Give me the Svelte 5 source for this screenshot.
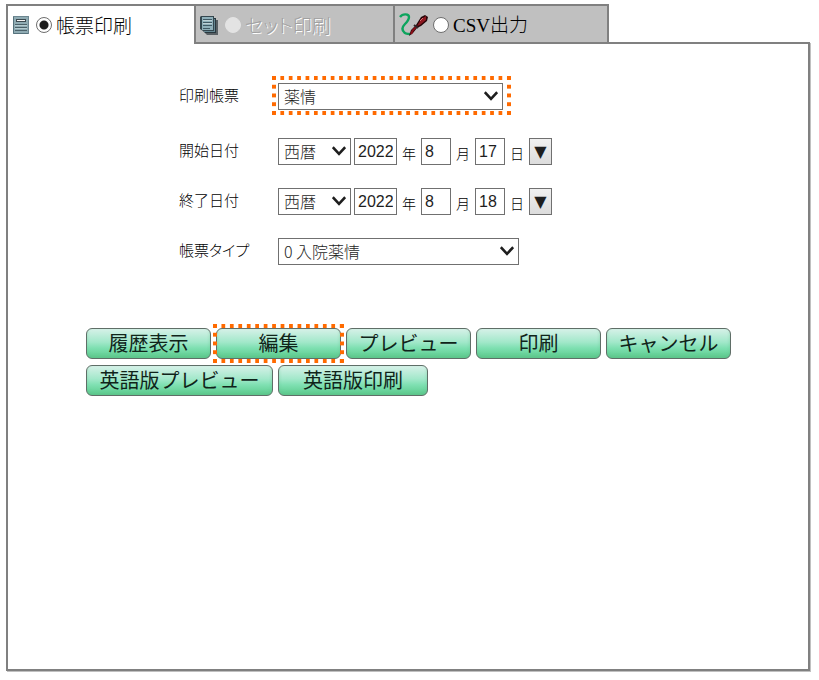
<script lang="ts">
    interface DateRow {
        id: string;
        label: string;
        era: string;
        year: string;
        month: string;
        day: string;
    }

    let mode = $state("report");
    let report = $state("薬情");
    let reportType = $state("0 入院薬情");

    let dates = $state<DateRow[]>([
        { id: "start", label: "開始日付", era: "西暦", year: "2022", month: "8", day: "17" },
        { id: "end", label: "終了日付", era: "西暦", year: "2022", month: "8", day: "18" },
    ]);

    const actions = [
        [
            { label: "履歴表示" },
            { label: "編集", marked: true },
            { label: "プレビュー" },
            { label: "印刷" },
            { label: "キャンセル" },
        ],
        [
            { label: "英語版プレビュー", size: "wide" },
            { label: "英語版印刷", size: "medium" },
        ],
    ];
</script>

{#snippet chevron()}
    <svg class="chevron" width="14" height="10" viewBox="0 0 14 10" aria-hidden="true">
        <path d="M0.8 1.2 L7 7.8 L13.2 1.2" fill="none" stroke="#1e1e1e" stroke-width="2.6" />
    </svg>
{/snippet}

<div class="page">
    <div class="tabs">
        <label class="tab first" class:active={mode === "report"}>
            <svg width="16" height="18" viewBox="0 0 16 18" aria-hidden="true">
                <rect width="16" height="18" fill="#8fabb3" />
                <path d="M0.5 0V17.5H16" fill="none" stroke="#56727c" />
                <path d="M15.5 0V18M0 0.5H16" fill="none" stroke="#6d8791" />
                <rect x="3" y="3" width="10" height="3" fill="#3d4a50" />
                <rect x="4" y="4" width="8" height="1" fill="#f4f4f4" />
                <path d="M2 8.5H14M2 11.5H14M2 14.5H14" stroke="#4c626a" />
                <path d="M2 9.5H14M2 12.5H14" stroke="#b4cbd0" />
            </svg>
            <input type="radio" name="mode" value="report" bind:group={mode} />
            <span>帳票印刷</span>
        </label>
        <label class="tab second disabled">
            <svg width="18" height="19" viewBox="0 0 18 19" aria-hidden="true">
                <path d="M5 4H18V19H7L5 17Z" fill="#596064" />
                <path d="M3 2H16V17H5L3 15Z" fill="#29383f" />
                <path d="M4 3H15V16H4Z" fill="#668792" />
                <path d="M1 0H14V15H3L0 13V1Z" fill="#35474f" />
                <rect x="2" y="1" width="11" height="13" fill="#8fb0ba" />
                <path d="M3 3.5H12M3 6.5H12M3 9.5H12M3 12.5H10" stroke="#415a65" />
                <path d="M3 4.5H12M3 7.5H12" stroke="#bed1d6" />
            </svg>
            <input type="radio" name="mode" value="set" disabled bind:group={mode} />
            <span>セット印刷</span>
        </label>
        <label class="tab third" class:active={mode === "csv"}>
            <svg class="pen" width="29" height="24" viewBox="0 0 29 24" aria-hidden="true">
                <path
                    d="M1 4C4 0 10 1 10 4C10 7 8 9 6 11C3 14 3 17 5 19C6 21 9 21 11 21"
                    fill="none"
                    stroke="#0da45d"
                    stroke-width="2.4"
                />
                <path d="M10 23L12 17L17 12L22 4L26 2L29 4L28 8L22 13L18 15L14 20Z" fill="#260609" />
                <path d="M12 21L14 17L18 13" fill="none" stroke="#8a0f18" stroke-width="2" />
                <path d="M18 13L22 6L27 3L27 7L21 12Z" fill="#8d1820" />
                <path d="M21 8L24 5" stroke="#dc6b70" />
                <path d="M15 12L19 15" stroke="#30272a" stroke-width="2" />
            </svg>
            <input type="radio" name="mode" value="csv" bind:group={mode} />
            <span><span class="latin">CSV</span>出力</span>
        </label>
    </div>

    <main class="panel">
        <form class="fields" onsubmit={(e) => e.preventDefault()}>
            <div class="row report-row">
                <label class="name" for="report">印刷帳票</label>
                <div class="select marked">
                    <select id="report" class="report" bind:value={report}>
                        <option>薬情</option>
                    </select>
                    {@render chevron()}
                </div>
            </div>

            {#each dates as date (date.id)}
                <div class="row">
                    <label class="name" for="{date.id}-era">{date.label}</label>
                    <div class="select">
                        <select id="{date.id}-era" class="era" bind:value={date.era}>
                            <option>西暦</option>
                        </select>
                        {@render chevron()}
                    </div>
                    <input id="{date.id}-year" class="year" type="text" bind:value={date.year} />
                    <label class="unit" for="{date.id}-year">年</label>
                    <input id="{date.id}-month" type="text" bind:value={date.month} />
                    <label class="unit" for="{date.id}-month">月</label>
                    <input id="{date.id}-day" type="text" bind:value={date.day} />
                    <label class="unit" for="{date.id}-day">日</label>
                    <button class="picker" type="button">▼</button>
                </div>
            {/each}

            <div class="row">
                <label class="name" for="type">帳票タイプ</label>
                <div class="select">
                    <select id="type" class="type" bind:value={reportType}>
                        <option>0 入院薬情</option>
                    </select>
                    {@render chevron()}
                </div>
            </div>
        </form>

        <div class="actions">
            {#each actions as group}
                <div class="action-row">
                    {#each group as action (action.label)}
                        <button class="action {action.size ?? ''}" class:marked={action.marked} type="button">
                            {action.label}
                        </button>
                    {/each}
                </div>
            {/each}
        </div>
    </main>
</div>

<style>
    :global(body) {
        background: #fff;
    }

    .page {
        box-sizing: border-box;
        display: flex;
        flex-direction: column;
        min-height: 100vh;
        padding: 4px 9px 9px 6px;
        color: #000;
        font-family: "Liberation Sans", "Noto Sans CJK JP", sans-serif;
    }

    .tabs {
        display: flex;
    }

    .tab {
        box-sizing: border-box;
        display: flex;
        align-items: center;
        height: 40px;
        padding: 2px 4px 0;
        border: 2px solid #808080;
        border-right: none;
        background: #c0c0c0;
        font-family: "Noto Sans CJK JP", sans-serif;
        font-size: 19px;
        line-height: 28px;
        font-weight: 300;
        font-feature-settings: "palt";
        white-space: nowrap;
    }

    .tab.active {
        position: relative;
        z-index: 1;
        padding-bottom: 2px;
        border-bottom: none;
        background: #fff;
    }

    .tab svg {
        flex: none;
        margin-right: 7px;
    }

    .tab svg.pen {
        margin-right: 5px;
    }

    .latin {
        font-family: "Times New Roman", "Liberation Serif", serif;
        font-weight: normal;
        font-feature-settings: normal;
    }

    .tab.first {
        width: 188px;
        padding-left: 5px;
    }

    .second {
        width: 199px;
    }

    .third {
        width: 216px;
        border-right: 2px solid #808080;
    }

    .tab.disabled {
        color: #a0a0a0;
        text-shadow: 1px 1px #fff;
    }

    .tab input {
        flex: none;
        appearance: none;
        width: 16px;
        height: 16px;
        margin: 0 4px 0 0;
        border: 1px solid #6e6e6e;
        border-radius: 50%;
        background: #fff;
    }

    .tab input:checked {
        background: radial-gradient(circle, #1e1e1e 4px, #fff 5px);
    }

    .tab input:disabled {
        border-color: #e3e3e3;
        background: #e3e3e3;
    }

    .panel {
        flex: 1;
        margin-top: -2px;
        border: 2px solid #808080;
        box-shadow: 1px 1px #c0c0c0;
    }

    .fields {
        display: flex;
        flex-direction: column;
        gap: 23px;
        padding: 39px 0 0 171px;
    }

    .row {
        display: flex;
        align-items: center;
    }

    .report-row {
        margin-bottom: 5px;
    }

    .name {
        width: 99px;
        padding-bottom: 2px;
        font-size: 15px;
        line-height: 20px;
        font-weight: 300;
        font-feature-settings: "palt";
    }

    .select {
        position: relative;
        display: flex;
    }

    select,
    .row input {
        box-sizing: border-box;
        height: 27px;
        margin: 0;
        border: 1px solid #707070;
        border-radius: 0;
        background: #fff;
        color: #1e1e1e;
        font-size: 16px;
    }

    select {
        appearance: none;
        padding: 0 5px 2px;
        font-family: "Noto Sans CJK JP", sans-serif;
        font-weight: 300;
    }

    .chevron {
        position: absolute;
        top: 8px;
        right: 5px;
        pointer-events: none;
    }

    .report {
        width: 225px;
    }

    .era {
        width: 73px;
    }

    .type {
        width: 241px;
    }

    .row input {
        width: 30px;
        padding: 2px 3px;
        font-family: "Liberation Sans", sans-serif;
    }

    .row input.year {
        width: 43px;
        margin-left: 3px;
    }

    .unit {
        width: 24px;
        padding-top: 5px;
        font-size: 14px;
        line-height: 20px;
        font-weight: 300;
        text-align: center;
    }

    .picker {
        box-sizing: border-box;
        width: 23px;
        height: 27px;
        padding: 0;
        border: 1px solid #707070;
        border-radius: 0;
        background: linear-gradient(#f0f0f0, #dcdcdc);
        color: #1e1e1e;
        font-family: "DejaVu Sans", sans-serif;
        font-size: 16px;
        line-height: 24px;
    }

    .actions {
        display: flex;
        flex-direction: column;
        gap: 6px;
        padding: 63px 0 24px 78px;
    }

    .action-row {
        display: flex;
        gap: 5px;
    }

    .action {
        position: relative;
        width: 125px;
        height: 31px;
        padding: 0 0 2px;
        border: 1px solid #5f6e67;
        border-radius: 6px;
        background: linear-gradient(#d6f1e8, #a2e8ca 45%, #7fe0b2 65%, #5bcb8c);
        box-shadow: inset 0 -2px 3px #5fbf8c80;
        color: #10241a;
        font-family: "Noto Sans CJK JP", sans-serif;
        font-size: 20px;
        line-height: 27px;
        font-weight: 400;
        white-space: nowrap;
    }

    .wide {
        width: 187px;
    }

    .medium {
        width: 150px;
    }

    /* square-dotted frame; --across and --down are the gaps between dots per side */
    .marked::after {
        --across: 28;
        --down: 4;
        --step-x: calc((100% - 4px) / var(--across));
        --step-y: calc((100% - 4px) / var(--down));
        content: "";
        position: absolute;
        z-index: 1;
        inset: -7px -8px -5px -6px;
        background:
            linear-gradient(90deg, #ff6a00 4px, transparent 4px) 0 0 / var(--step-x) 4px repeat-x,
            linear-gradient(90deg, #ff6a00 4px, transparent 4px) 0 100% / var(--step-x) 4px repeat-x,
            linear-gradient(#ff6a00 4px, transparent 4px) 0 0 / 4px var(--step-y) repeat-y,
            linear-gradient(#ff6a00 4px, transparent 4px) 100% 0 / 4px var(--step-y) repeat-y;
        pointer-events: none;
    }

    .action.marked::after {
        --across: 15;
        inset: -5px -4px;
    }
</style>
